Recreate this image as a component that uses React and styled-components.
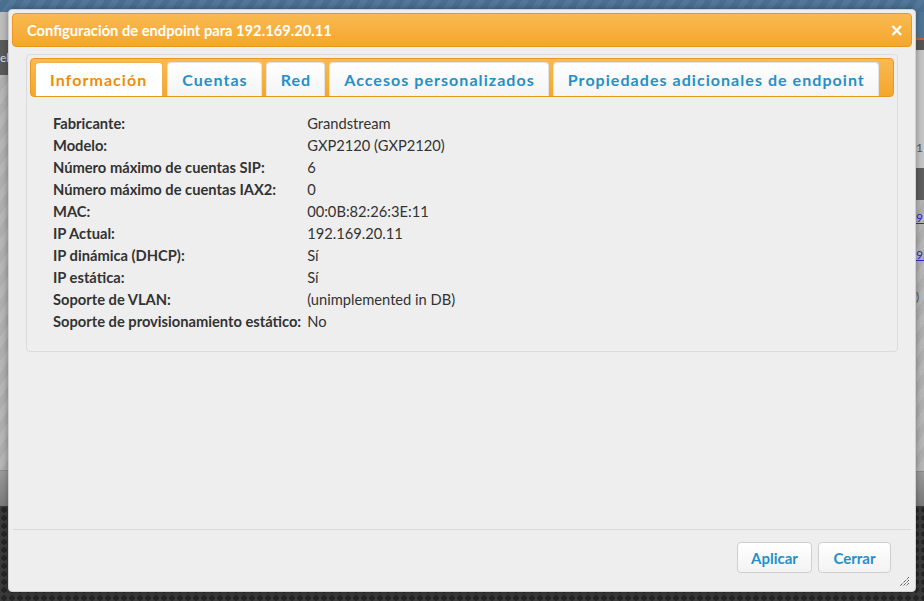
import React from "react";
import styled, { createGlobalStyle } from "styled-components";

const GlobalStyle = createGlobalStyle`
  html, body { margin: 0; padding: 0; }
  body { font-family: Lato, "Open Sans", sans-serif; overflow: hidden; }
`;

const Page = styled.div`
  position: relative;
  width: 924px;
  height: 601px;
  display: flex;
  flex-direction: column;
  overflow: hidden;
  background: #3b3b3b;
`;

const Header = styled.div`
  height: 12px;
  flex: none;
  background: repeating-linear-gradient(
    -55deg,
    #4a6e90 0 6px,
    #52779a 6px 12px
  );
`;

const Middle = styled.div`
  height: 494px;
  flex: none;
  display: flex;
  justify-content: space-between;
  background: repeating-linear-gradient(
    -55deg,
    #aeaeae 0 7px,
    #b6b6b6 7px 14px
  );
`;

const SideCol = styled.div`
  width: 8px;
  display: flex;
  flex-direction: column;
  overflow: hidden;
  font-size: 12px;
  color: #ddd;
`;

const Block = styled.div`
  height: ${(p) => p.$h}px;
  flex: none;
  box-sizing: border-box;
  background: ${(p) => p.$bg || "transparent"};
  border-bottom: ${(p) => (p.$line ? `${p.$lw || 1}px solid ${p.$line}` : "none")};
  color: ${(p) => p.$color || "#ddd"};
  display: flex;
  align-items: center;
  line-height: 1;
  white-space: nowrap;
  text-decoration: ${(p) => (p.$link ? "underline" : "none")};
`;

const Footer = styled.div`
  flex: 1;
  background-color: #3a3a3a;
  background-image: radial-gradient(circle, #252525 2.5px, transparent 3px);
  background-size: 8px 8px;
`;

const Dialog = styled.div`
  position: absolute;
  left: 8px;
  top: 9px;
  width: 908px;
  height: 583px;
  box-sizing: border-box;
  background: #eeeeee;
  border: 1px solid #d0d0d0;
  border-radius: 4px;
  box-shadow: 0 0 6px rgba(0, 0, 0, 0.35);
  padding: 3px;
  display: flex;
  flex-direction: column;
`;

const TitleBar = styled.div`
  height: 34px;
  flex: none;
  box-sizing: border-box;
  background: linear-gradient(#f9ba52, #f5a62c);
  border: 1px solid #e9981f;
  border-radius: 4px;
  display: flex;
  align-items: center;
  justify-content: space-between;
  padding: 0 7px 0 14px;
  color: #fff;
  font-weight: 700;
  font-size: 14.7px;
`;

const Close = styled.span`
  font-size: 17px;
  font-weight: 900;
  line-height: 1;
  font-family: "DejaVu Sans", sans-serif;
`;

const Content = styled.div`
  flex: 1;
  padding: 7px 14px 0 14px;
`;

const Panel = styled.div`
  box-sizing: border-box;
  height: 298px;
  border: 1px solid #dcdcdc;
  border-radius: 4px;
  padding: 3px;
`;

const TabBar = styled.div`
  height: 39px;
  box-sizing: border-box;
  background: linear-gradient(#f9ba52, #f5a62c);
  border: 1px solid #e9981f;
  border-radius: 4px;
  padding: 4px 4px 0 4px;
  display: flex;
  align-items: flex-end;
  gap: 4px;
`;

const Tab = styled.div`
  height: 34px;
  box-sizing: border-box;
  padding: 0 ${(p) => (p.$active ? 15 : 13)}px 0 14px;
  display: flex;
  align-items: center;
  border: 1px solid ${(p) => (p.$active ? "#f0b050" : "#e2e2e2")};
  border-bottom: none;
  border-radius: 4px 4px 0 0;
  background: ${(p) => (p.$active ? "#ffffff" : "linear-gradient(#ffffff, #f4f4f4)")};
  color: ${(p) => (p.$active ? "#ef8c0c" : "#2590c7")};
  font-weight: 700;
  font-size: 16px;
  letter-spacing: 1.05px;
  white-space: nowrap;
`;

const InfoTable = styled.table`
  margin: 15px 0 0 23px;
  border-collapse: collapse;
  font-size: 14.7px;
  color: #333;
`;

const Label = styled.td`
  font-weight: 700;
  padding: 0 6px 0 0;
  height: 22px;
  white-space: nowrap;
  color: #333;
`;

const Value = styled.td`
  padding: 0;
  height: 22px;
  white-space: nowrap;
`;

const ButtonBar = styled.div`
  flex: none;
  border-top: 1px solid #d9d9d9;
  margin: 0 1px;
  padding: 12px 20px 15px 0;
  display: flex;
  justify-content: flex-end;
  gap: 6px;
  position: relative;
`;

const Button = styled.button`
  height: 31px;
  box-sizing: border-box;
  padding: 0 13px;
  border: 1px solid #cfcfcf;
  border-radius: 4px;
  background: linear-gradient(#ffffff, #f3f3f3);
  color: #2590c7;
  font-family: Lato, "Open Sans", sans-serif;
  font-weight: 700;
  font-size: 15px;
  width: ${(p) => p.$w}px;
`;

const Grip = styled.svg`
  position: absolute;
  right: 1px;
  bottom: 1px;
`;

const rows = [
  ["Fabricante:", "Grandstream"],
  ["Modelo:", "GXP2120 (GXP2120)"],
  ["Número máximo de cuentas SIP:", "6"],
  ["Número máximo de cuentas IAX2:", "0"],
  ["MAC:", "00:0B:82:26:3E:11"],
  ["IP Actual:", "192.169.20.11"],
  ["IP dinámica (DHCP):", "Sí"],
  ["IP estática:", "Sí"],
  ["Soporte de VLAN:", "(unimplemented in DB)"],
  ["Soporte de provisionamiento estático:", "No"],
];

const tabs = [
  "Información",
  "Cuentas",
  "Red",
  "Accesos personalizados",
  "Propiedades adicionales de endpoint",
];

export default function App() {
  return (
    <>
      <GlobalStyle />
      <Page>
        <Header />
        <Middle>
          <SideCol>
            <Block $h={28} $bg="#bcbcbc" />
            <Block $h={35} $bg="#5a5a5a">el</Block>
            <Block $h={396} $line="#8a8a8a" />
            <Block $h={35} $bg="linear-gradient(#9a9a9a, #7a7a7a)" />
          </SideCol>
          <SideCol>
            <Block $h={28} $bg="#4f7596" $line="#c5603a" $lw={2} />
            <Block $h={10} $bg="#555" />
            <Block $h={88} $bg="#c4c4c4" />
            <Block $h={20} $bg="#c4c4c4" $color="#555">1</Block>
            <Block $h={10} $bg="#c4c4c4" />
            <Block $h={32} $bg="#5e5e5e" />
            <Block $h={36} $color="#2a2ad0" $link>9.</Block>
            <Block $h={37} $color="#2a2ad0" $link>9.</Block>
            <Block $h={48} $color="#555">)</Block>
            <Block $h={151} $line="#8a8a8a" />
            <Block $h={34} $bg="linear-gradient(#9a9a9a, #7a7a7a)" />
          </SideCol>
        </Middle>
        <Footer />
        <Dialog>
          <TitleBar>
            <span>Configuración de endpoint para 192.169.20.11</span>
            <Close>×</Close>
          </TitleBar>
          <Content>
            <Panel>
              <TabBar>
                {tabs.map((t, i) => (
                  <Tab key={t} $active={i === 0}>
                    {t}
                  </Tab>
                ))}
              </TabBar>
              <InfoTable>
                <tbody>
                  {rows.map(([l, v]) => (
                    <tr key={l}>
                      <Label>{l}</Label>
                      <Value>{v}</Value>
                    </tr>
                  ))}
                </tbody>
              </InfoTable>
            </Panel>
          </Content>
          <ButtonBar>
            <Button $w={75}>Aplicar</Button>
            <Button $w={73}>Cerrar</Button>
            <Grip width="11" height="11" viewBox="0 0 11 11">
              <path d="M10 1 L1 10 M10 4 L4 10 M10 7 L7 10" stroke="#222" strokeWidth="1" strokeDasharray="1 1" />
            </Grip>
          </ButtonBar>
        </Dialog>
      </Page>
    </>
  );
}
